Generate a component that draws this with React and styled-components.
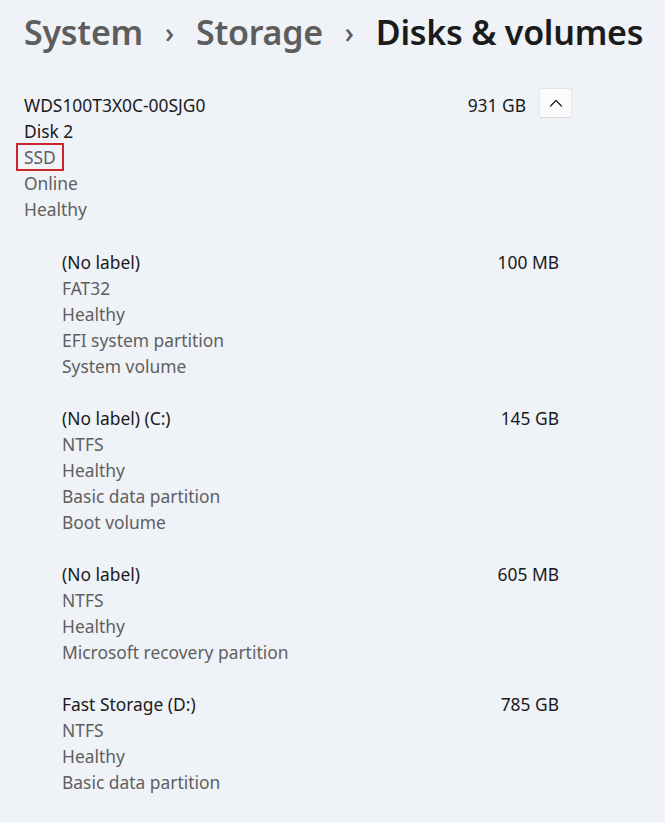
import React from 'react';
import styled, { createGlobalStyle } from 'styled-components';

const GlobalStyle = createGlobalStyle`
  html, body {
    margin: 0;
    padding: 0;
    background: #eff2f7;
  }
  body {
    font-family: "Noto Sans", "Open Sans", sans-serif;
    -webkit-font-smoothing: antialiased;
  }
`;

const Page = styled.div`
  width: 665px;
  min-height: 822px;
  box-sizing: border-box;
  padding: 9px 0 0 24px;
  background: #eff2f7;
`;

const Breadcrumb = styled.h1`
  display: flex;
  align-items: center;
  margin: 0;
  font-size: 34px;
  font-weight: 600;
  line-height: 46px;
  letter-spacing: -0.25px;
`;

const Crumb = styled.span`
  color: ${(p) => (p.current ? '#1b1b1b' : '#5d5d5d')};
`;

const Chevron = styled.span`
  display: inline-flex;
  width: 53px;
  justify-content: center;
  color: #5d5d5d;
  font-size: 28px;
  font-weight: 500;
`;

const Disk = styled.section`
  margin-top: 37px;
`;

const DiskHeader = styled.div`
  display: flex;
  align-items: flex-start;
  width: 548px;
`;

const Lines = styled.div`
  flex: 1;
  display: flex;
  flex-direction: column;
`;

const Line = styled.div`
  height: 26px;
  font-size: 17.4px;
  line-height: 26px;
  color: ${(p) => (p.primary ? '#1a1a1a' : '#5f5f5f')};
  white-space: nowrap;
`;

const Marked = styled.span`
  display: inline-block;
  vertical-align: top;
  margin: -1px 0 0 -8px;
  padding: 0 6px;
  border: 2px solid #c9262c;
  line-height: 24px;
  height: 24px;
`;

const Size = styled.div`
  font-size: 17.4px;
  line-height: 26px;
  color: #1a1a1a;
  white-space: nowrap;
`;

const ToggleButton = styled.button`
  display: flex;
  align-items: center;
  justify-content: center;
  width: 33px;
  height: 30px;
  margin: -4px 0 0 13px;
  padding: 0;
  background: #fbfbfc;
  border: 1px solid #e3e5e8;
  border-bottom-color: #d6d8db;
  border-radius: 3px;
  color: #1b1b1b;
`;

const Partitions = styled.div`
  display: flex;
  flex-direction: column;
  gap: 26px;
  margin: 27px 0 0 38px;
  width: 497px;
`;

const Partition = styled.div`
  display: flex;
  align-items: flex-start;
`;

const disk = {
  model: 'WDS100T3X0C-00SJG0',
  size: '931 GB',
};

const partitions = [
  { name: '(No label)', size: '100 MB', details: ['FAT32', 'Healthy', 'EFI system partition', 'System volume'] },
  { name: '(No label) (C:)', size: '145 GB', details: ['NTFS', 'Healthy', 'Basic data partition', 'Boot volume'] },
  { name: '(No label)', size: '605 MB', details: ['NTFS', 'Healthy', 'Microsoft recovery partition'] },
  { name: 'Fast Storage (D:)', size: '785 GB', details: ['NTFS', 'Healthy', 'Basic data partition'] },
];

function ChevronUp() {
  return (
    <svg width="14" height="14" viewBox="0 0 14 14" fill="none">
      <path d="M1.5 10L7 4.5L12.5 10" stroke="currentColor" strokeWidth="1.2" strokeLinecap="round" strokeLinejoin="round" />
    </svg>
  );
}

export default function App() {
  return (
    <Page>
      <GlobalStyle />
      <Breadcrumb>
        <Crumb>System</Crumb>
        <Chevron>›</Chevron>
        <Crumb>Storage</Crumb>
        <Chevron>›</Chevron>
        <Crumb current>Disks &amp; volumes</Crumb>
      </Breadcrumb>

      <Disk>
        <DiskHeader>
          <Lines>
            <Line primary>{disk.model}</Line>
            <Line primary>Disk 2</Line>
            <Line><Marked>SSD</Marked></Line>
            <Line>Online</Line>
            <Line>Healthy</Line>
          </Lines>
          <Size>{disk.size}</Size>
          <ToggleButton aria-label="Collapse">
            <ChevronUp />
          </ToggleButton>
        </DiskHeader>

        <Partitions>
          {partitions.map((p, i) => (
            <Partition key={i}>
              <Lines>
                <Line primary>{p.name}</Line>
                {p.details.map((d) => (
                  <Line key={d}>{d}</Line>
                ))}
              </Lines>
              <Size>{p.size}</Size>
            </Partition>
          ))}
        </Partitions>
      </Disk>
    </Page>
  );
}
